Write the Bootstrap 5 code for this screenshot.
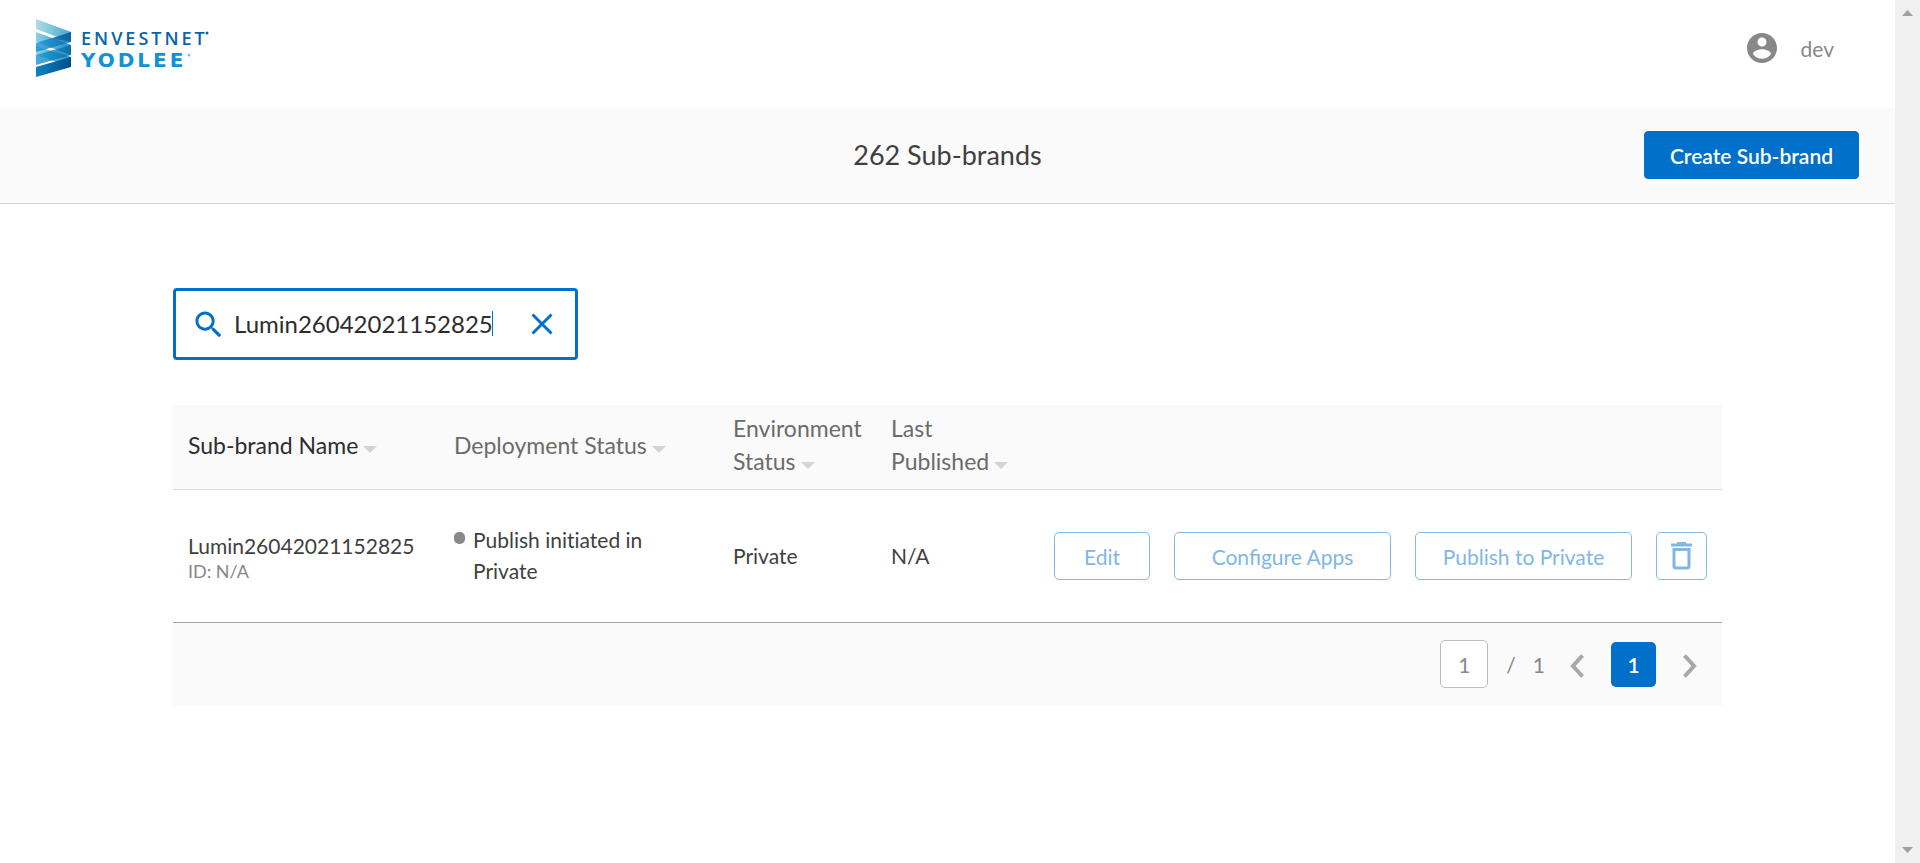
<!DOCTYPE html>
<html lang="en">
<head>
<meta charset="utf-8">
<meta name="viewport" content="width=device-width, initial-scale=1">
<title>Sub-brands</title>
<link href="https://cdn.jsdelivr.net/npm/bootstrap@5.3.0/dist/css/bootstrap.min.css" rel="stylesheet">
<style>
  :root { --brand: #0070cb; --brand-soft: #80b7e5; --panel: #fafafa; }
  body { font-family: Lato, sans-serif; font-size: 21px; line-height: 31px; color: #3f3f3f; background: #fff; font-variant-ligatures: none; }
  .scroll-rail { width: 25px; background: #f0f0f0; padding: 10px 0; }
  .top-bar { height: 108px; padding: 0 61px 0 36px; }
  .logo-link { margin-top: -12px; }
  .logo-text { font-family: "Open Sans", sans-serif; font-size: 18px; font-weight: 600; letter-spacing: 3px; }
  .logo-wide { font-family: "DejaVu Sans", sans-serif; font-size: 20px; font-weight: 700; letter-spacing: 3px; }
  .user-link { color: #888; gap: 24px; margin-top: -12px; }
  .title-bar { height: 96px; background: var(--panel); border-bottom: 1px solid #d6d6d6; padding: 0 36px 2px; }
  .title-bar h1 { font-size: 27px; line-height: 36px; font-weight: 400; }
  .btn-create { --bs-btn-font-size: 21px; --bs-btn-font-weight: 600; --bs-btn-line-height: 24px; --bs-btn-color: #fff; --bs-btn-bg: var(--brand); --bs-btn-border-color: var(--brand); --bs-btn-border-radius: 4px; height: 48px; width: 215px; padding: 2px 0 0; }
  .page-body { padding: 84px 173px; }
  .search-box { width: 405px; height: 72px; border: 3px solid var(--brand); border-radius: 4px; color: var(--brand); padding: 0 22px 0 18px; }
  .search-box input { font-size: 24px; line-height: 36px; color: #2d2d2d; width: 100%; height: 36px; }
  .text-caret { position: absolute; left: 262px; top: 5px; width: 1px; height: 25px; background: var(--brand); }
  .grid-table { --bs-table-bg: transparent; table-layout: fixed; margin: 45px 0 0; color: inherit; }
  .grid-table th { background: var(--panel); font-size: 23px; line-height: 33px; font-weight: 400; padding: 7px 15px 11px; border-bottom: 1px solid #dcdcdc; color: #6b6b6b; vertical-align: middle; }
  .grid-table th.sorted { color: #2d2d2d; }
  .grid-table td { height: 133px; padding: 0 15px 2px; border-bottom: 1px solid #a3a3a3; }
  .grid-table td.actions { padding-bottom: 0; }
  .sort-btn { color: inherit; font: inherit; }
  .sort-btn::after { content: ""; display: inline-block; margin-left: 5px; border: 7px solid transparent; border-top-color: #d4d4d4; border-bottom: 0; vertical-align: 1px; }
  .brand-id { font-size: 18px; line-height: 20px; color: #888; }
  .status-dot { width: 11px; height: 12px; border-radius: 5px; background: #888; margin-top: 8px; flex: none; }
  .btn-soft { --bs-btn-font-size: 21px; --bs-btn-line-height: 24px; --bs-btn-color: var(--brand-soft); --bs-btn-border-color: var(--brand-soft); --bs-btn-border-radius: 5px; height: 48px; padding: 2px 0 0; flex: none; }
  .w-edit { width: 96px; } .w-action { width: 217px; } .w-icon { width: 51px; padding: 0; }
  .pager { background: var(--panel); height: 83px; padding: 0 25px 1px; color: #888; }
  .pager input { width: 48px; height: 48px; border: 1px solid #bdbdbd; border-radius: 5px; color: #888; text-align: center; padding: 0; margin-right: 18px; }
  .page-total { margin: 0 25px 0 17px; }
  .page-current { width: 45px; height: 45px; border-radius: 5px; background: var(--brand); color: #fff; margin: 0 27px; }
  .page-current:hover { color: #fff; }
  .pager .btn { padding-top: 4px; }
</style>
</head>
<body>
<div class="d-flex min-vh-100">
  <div class="flex-grow-1">
    <header class="top-bar d-flex align-items-center justify-content-between">
      <a href="#" class="logo-link" aria-label="Envestnet Yodlee">
        <svg class="d-block" width="184" height="58" viewBox="0 0 184 58">
          <defs>
            <linearGradient id="pale" x1="0" x2="1"><stop offset="0" stop-color="#b0dde4"/><stop offset="1" stop-color="#3fa9d3"/></linearGradient>
            <linearGradient id="mid" x1="0" x2="1"><stop offset="0" stop-color="#8fd0e6"/><stop offset="1" stop-color="#1c8fc8"/></linearGradient>
            <linearGradient id="deep" x1="0" x2="1"><stop offset="0" stop-color="#1796d3"/><stop offset="1" stop-color="#0468a6"/></linearGradient>
            <linearGradient id="base" x1="0" x2="1"><stop offset="0" stop-color="#0a83c4"/><stop offset="1" stop-color="#004f88"/></linearGradient>
          </defs>
          <path d="M0 0 35 13V23L0 10Z" fill="url(#pale)"/>
          <path d="M0 13 35 26V36L0 23Z" fill="url(#mid)"/>
          <path d="M0 27 35 38V48L0 36Z" fill="url(#mid)"/>
          <path d="M35 13V23L0 33V24Z" fill="url(#deep)" opacity=".8"/>
          <path d="M35 26V36L0 46V36Z" fill="url(#deep)" opacity=".8"/>
          <path d="M35 38V48L0 58V48Z" fill="url(#base)"/>
          <path d="M17 19.500 35 13V23Z" fill="#075c9c" opacity=".6"/>
          <text class="logo-text" x="45" y="26" fill="#0a64a4">ENVESTNET</text>
          <text class="logo-wide" x="45" y="48" fill="#0f93d6">YODLEE</text>
          <circle cx="171" cy="14" r="1.500" fill="#0a64a4"/>
          <circle cx="153" cy="36" r="1.500" fill="#7cc4e8"/>
        </svg>
      </a>
      <a href="#" class="user-link d-flex align-items-center text-decoration-none">
        <svg width="30" height="30" viewBox="2 2 20 20" fill="currentColor"><path d="M12 2C6.480 2 2 6.480 2 12s4.480 10 10 10 10-4.480 10-10S17.520 2 12 2zm0 3c1.660 0 3 1.340 3 3s-1.340 3-3 3-3-1.340-3-3 1.340-3 3-3zm0 14.200c-2.500 0-4.710-1.280-6-3.220.030-1.990 4-3.080 6-3.080 1.990 0 5.970 1.090 6 3.080-1.290 1.940-3.500 3.220-6 3.220z"/></svg>
        <span>dev</span>
      </a>
    </header>
    <section class="title-bar row g-0 align-items-center">
      <h1 class="col-4 offset-4 mb-0 text-center">262 Sub-brands</h1>
      <div class="col-4 text-end"><button type="button" class="btn btn-create">Create Sub-brand</button></div>
    </section>
    <main class="page-body">
      <form class="search-box d-flex align-items-center">
        <svg class="flex-shrink-0" width="28" height="28" viewBox="2 2 19 19" fill="currentColor"><path d="M15.500 14h-.790l-.280-.270C15.410 12.590 16 11.110 16 9.500 16 5.910 13.090 3 9.500 3S3 5.910 3 9.500 5.910 16 9.500 16c1.610 0 3.090-.590 4.230-1.570l.270.280v.790l5 4.990L20.490 19l-4.990-5zm-6 0C7.010 14 5 11.990 5 9.500S7.010 5 9.500 5 14 7.010 14 9.500 11.990 14 9.500 14z"/></svg>
        <div class="position-relative flex-grow-1 ms-2 me-4">
          <input class="border-0 py-0 ps-1 pe-0 d-block bg-transparent" type="text" aria-label="Search sub-brands" value="Lumin26042021152825">
          <span class="text-caret"></span>
        </div>
        <button type="button" class="btn p-0 border-0 lh-1 flex-shrink-0 text-reset" aria-label="Clear search">
          <svg class="d-block" width="22" height="22" viewBox="0 0 22 22" fill="none" stroke="currentColor" stroke-width="3"><path d="M1.500 1.500l19 19M20.500 1.500l-19 19"/></svg>
        </button>
      </form>

      <table class="table grid-table align-middle">
        <colgroup><col width="266"><col width="279"><col width="158"><col width="162"><col></colgroup>
        <thead>
          <tr>
            <th class="sorted"><button type="button" class="sort-btn border-0 bg-transparent p-0 text-start">Sub-brand Name</button></th>
            <th><button type="button" class="sort-btn border-0 bg-transparent p-0 text-start">Deployment Status</button></th>
            <th><button type="button" class="sort-btn border-0 bg-transparent p-0 text-start">Environment<br>Status</button></th>
            <th><button type="button" class="sort-btn border-0 bg-transparent p-0 text-start">Last<br>Published</button></th>
            <th></th>
          </tr>
        </thead>
        <tbody>
          <tr>
            <td><div>Lumin26042021152825</div><div class="brand-id">ID: N/A</div></td>
            <td><div class="d-flex gap-2 pe-5"><span class="status-dot"></span><span>Publish initiated in Private</span></div></td>
            <td>Private</td>
            <td>N/A</td>
            <td class="actions">
              <div class="d-flex justify-content-end gap-4">
                <button type="button" class="btn btn-soft w-edit">Edit</button>
                <button type="button" class="btn btn-soft w-action">Configure Apps</button>
                <button type="button" class="btn btn-soft w-action">Publish to Private</button>
                <button type="button" class="btn btn-soft w-icon" aria-label="Delete"><svg width="21" height="28" viewBox="0 0 21 28" fill="none" stroke="currentColor"><path d="M3 7.500H18V24Q18 26 16 26H5Q3 26 3 24Z" stroke-width="3"/><path d="M0 3H21" stroke-width="3"/><path d="M6 1H15" stroke-width="2"/></svg></button>
              </div>
            </td>
          </tr>
        </tbody>
      </table>
      <nav class="pager d-flex align-items-center justify-content-end" aria-label="Pages">
        <input type="text" value="1" aria-label="Page number">
        <span>/</span>
        <span class="page-total">1</span>
        <button type="button" class="btn px-0 pb-0 border-0 lh-1 text-reset" aria-label="Previous page"><svg class="d-block" width="14" height="24" viewBox="0 0 14 24" fill="none" stroke="#a8a8a8" stroke-width="4"><path d="M12.500 1.500 3 12l9.500 10.500"/></svg></button>
        <a href="#" class="page-current d-flex align-items-center justify-content-center text-decoration-none fw-semibold">1</a>
        <button type="button" class="btn px-0 pb-0 border-0 lh-1 text-reset" aria-label="Next page"><svg class="d-block" width="14" height="24" viewBox="0 0 14 24" fill="none" stroke="#a8a8a8" stroke-width="4"><path d="M1.500 1.500 11 12 1.500 22.500"/></svg></button>
      </nav>
    </main>
  </div>
  <div class="scroll-rail d-flex flex-column align-items-center justify-content-between flex-shrink-0" aria-hidden="true">
    <svg width="11" height="6" viewBox="0 0 11 6" fill="#a0a0a0"><path d="M0 6 5.500 0 11 6Z"/></svg>
    <svg width="11" height="6" viewBox="0 0 11 6" fill="#a0a0a0"><path d="M0 0 5.500 6 11 0Z"/></svg>
  </div>
</div>
<script src="https://cdn.jsdelivr.net/npm/bootstrap@5.3.0/dist/js/bootstrap.bundle.min.js"></script>
</body>
</html>
